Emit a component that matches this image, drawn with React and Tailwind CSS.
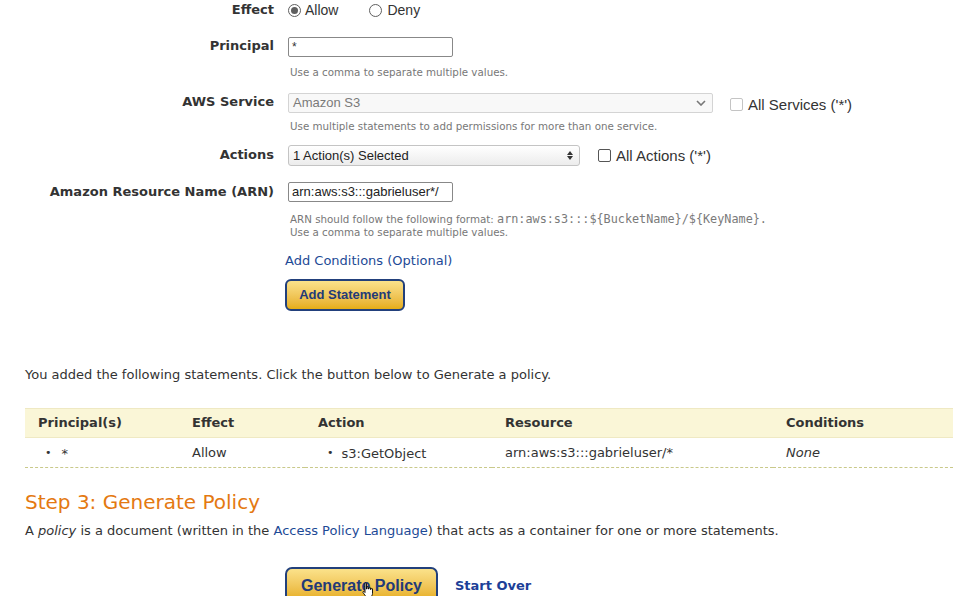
import React from 'react';

const verdana = { fontFamily: '"DejaVu Sans", Verdana, sans-serif' };
const arial = { fontFamily: '"Liberation Sans", Arial, sans-serif' };

const Radio = ({ checked }) => (
    <span className="inline-flex w-[13px] h-[13px] rounded-full border border-[#5f5f5f] bg-white items-center justify-center">
        {checked && <span className="w-[7px] h-[7px] rounded-full bg-[#5f5f5f]" />}
    </span>
);

const Checkbox = ({ disabled }) => (
    <span className={`inline-block w-[13px] h-[13px] rounded-[2px] border bg-white ${disabled ? 'border-[#c4c4c4]' : 'border-[#555]'}`} />
);

const Row = ({ label, className = '', children }) => (
    <div className={`grid grid-cols-[274px_1fr] gap-x-[14px] ${className}`}>
        <div className="text-right font-bold text-[13px] leading-[16px] text-[#333]">{label}</div>
        <div>{children}</div>
    </div>
);

const Hint = ({ children, className = '' }) => (
    <div className={`h-[13px] text-[10.3px] leading-[13px] text-[#777] pl-[2px] whitespace-nowrap ${className}`}>{children}</div>
);

export default function App() {
    return (
        <div className="w-[953px] h-[596px] overflow-hidden bg-white text-[#333]" style={verdana}>
            {/* statement form */}
            <div className="pt-[2px]">
                <Row label="Effect">
                    <div className="flex items-center text-[14px] leading-[16px] text-[#333]" style={arial}>
                        <Radio checked />
                        <span className="ml-[4px]">Allow</span>
                        <span className="ml-[31px] flex items-center">
                            <Radio />
                            <span className="ml-[5px]">Deny</span>
                        </span>
                    </div>
                </Row>

                <Row label="Principal" className="mt-[19px] [&>div:first-child]:pt-[1px]">
                    <div className="w-[165px] h-[20px] border border-[#888] rounded-[2px] px-[3px] text-[12px] leading-[18px] text-[#333]" style={arial}>*</div>
                    <Hint className="mt-[9px]">Use a comma to separate multiple values.</Hint>
                </Row>

                <Row label="AWS Service" className="mt-[14px] [&>div:first-child]:pt-[1px]">
                    <div className="flex items-start h-[20px]">
                        <div className="w-[425px] h-[20px] border border-[#d4d4d4] rounded-[2px] bg-[#f8f8f8] flex items-center justify-between pl-[4px] pr-[6px] text-[13px] text-[#7a7a7a]" style={arial}>
                            <span>Amazon S3</span>
                            <svg width="10" height="6" viewBox="0 0 10 6"><path d="M1 1l4 4 4-4" fill="none" stroke="#777" strokeWidth="1.6" /></svg>
                        </div>
                        <span className="ml-[17px] mt-[3px] flex items-center leading-[17px]" style={arial}>
                            <Checkbox disabled />
                            <span className="ml-[5px] text-[15px] text-[#333]">All Services ('*')</span>
                        </span>
                    </div>
                    <Hint className="mt-[7px]">Use multiple statements to add permissions for more than one service.</Hint>
                </Row>

                <Row label="Actions" className="mt-[12px] [&>div:first-child]:pt-[2px]">
                    <div className="flex items-center">
                        <div className="w-[292px] h-[21px] border border-[#c4c4c4] rounded-[3px] bg-gradient-to-b from-white to-[#ececec] flex items-center justify-between pl-[4px] pr-[6px] text-[13px] text-[#222]" style={arial}>
                            <span>1 Action(s) Selected</span>
                            <svg width="6" height="9" viewBox="0 0 6 9"><path d="M0 4h6L3 0z M0 5h6L3 9z" fill="#333" /></svg>
                        </div>
                        <span className="ml-[18px] flex items-center leading-[17px]" style={arial}>
                            <Checkbox />
                            <span className="ml-[5px] text-[15px] text-[#333]">All Actions ('*')</span>
                        </span>
                    </div>
                </Row>

                <Row label="Amazon Resource Name (ARN)" className="mt-[16px] [&>div:first-child]:pt-[2px]">
                    <div className="w-[165px] h-[20px] border border-[#888] rounded-[2px] px-[3px] text-[13px] leading-[18px] text-[#222]" style={arial}>arn:aws:s3:::gabrieluser*/</div>
                    <Hint className="mt-[11px]">
                        ARN should follow the following format: <span className="text-[11.8px] leading-[13px] text-[#7a7a7a]" style={{ fontFamily: '"DejaVu Sans Mono", monospace' }}>arn:aws:s3:::$&#123;BucketName&#125;/$&#123;KeyName&#125;.</span>
                    </Hint>
                    <Hint>Use a comma to separate multiple values.</Hint>
                </Row>

                <div className="ml-[285px] mt-[14px] text-[13px] leading-[16px] text-[#1d4a96]">Add Conditions (Optional)</div>

                <div className="ml-[285px] mt-[10px]">
                    <button className="w-[120px] h-[32px] rounded-[6px] border-2 border-[#22407c] bg-gradient-to-b from-[#fbe28a] to-[#e6ad10] text-[#223a78] font-bold text-[13px]" style={arial}>
                        Add Statement
                    </button>
                </div>
            </div>

            {/* added statements */}
            <p className="ml-[25px] mt-[56px] text-[13px] leading-[16px] text-[#333]">You added the following statements. Click the button below to Generate a policy.</p>

            <table className="ml-[25px] mt-[25px] w-[928px] text-[13px] text-[#333] border-collapse">
                <thead>
                    <tr className="bg-[#faf6d7] border-t border-b border-[#efe9c3] text-left">
                        <th className="w-[154px] h-[29px] pl-[13px] font-bold">Principal(s)</th>
                        <th className="w-[126px] pl-[13px] font-bold">Effect</th>
                        <th className="w-[187px] pl-[13px] font-bold">Action</th>
                        <th className="w-[281px] pl-[13px] font-bold">Resource</th>
                        <th className="pl-[13px] font-bold">Conditions</th>
                    </tr>
                </thead>
                <tbody>
                    <tr className="border-b border-dashed border-[#c9c98a]">
                        <td className="h-[30px] pl-[20px]">
                            <span className="inline-flex items-center gap-[10px]"><span className="text-[11px]">•</span><span>*</span></span>
                        </td>
                        <td className="pl-[13px]">Allow</td>
                        <td className="pl-[22px]">
                            <span className="inline-flex items-center gap-[8px]"><span className="text-[11px]">•</span><span>s3:GetObject</span></span>
                        </td>
                        <td className="pl-[13px]">arn:aws:s3:::gabrieluser/*</td>
                        <td className="pl-[13px] italic">None</td>
                    </tr>
                </tbody>
            </table>

            {/* step 3 */}
            <h2 className="ml-[25px] mt-[22px] text-[20px] leading-[24px] text-[#e47911] font-normal">Step 3: Generate Policy</h2>
            <p className="ml-[25px] mt-[9px] text-[13px] leading-[16px] text-[#333]">
                A <i>policy</i> is a document (written in the <span className="text-[#1d4a96]">Access Policy Language</span>) that acts as a container for one or more statements.
            </p>

            <div className="ml-[285px] mt-[28px] flex items-center">
                <div className="relative">
                    <button className="w-[153px] h-[36px] rounded-[7px] border-2 border-[#22407c] bg-gradient-to-b from-[#fbe28a] to-[#e6ad10] text-[#223a78] font-bold text-[16px] pt-[2px]" style={arial}>
                        Generate Policy
                    </button>
                    <svg className="absolute left-[76px] top-[15px]" width="14" height="16" viewBox="0 0 14 16">
                        <path d="M4 1.5c0-.8 1.5-.8 1.5 0V7h.5V5.5c0-.8 1.5-.8 1.5 0V7h.5V6c0-.8 1.5-.8 1.5 0V7.5h.5V7c0-.8 1.5-.8 1.5 0v4.5c0 1.5-1 3-2 3.5H6c-1 0-3-3-4-4.5-.5-.8.5-1.5 1.2-.8L4 10.5z" fill="#fff" stroke="#000" strokeWidth="0.9" />
                    </svg>
                </div>
                <span className="ml-[17px] mt-[2px] text-[13px] font-bold text-[#1d3f98]">Start Over</span>
            </div>
        </div>
    );
}
